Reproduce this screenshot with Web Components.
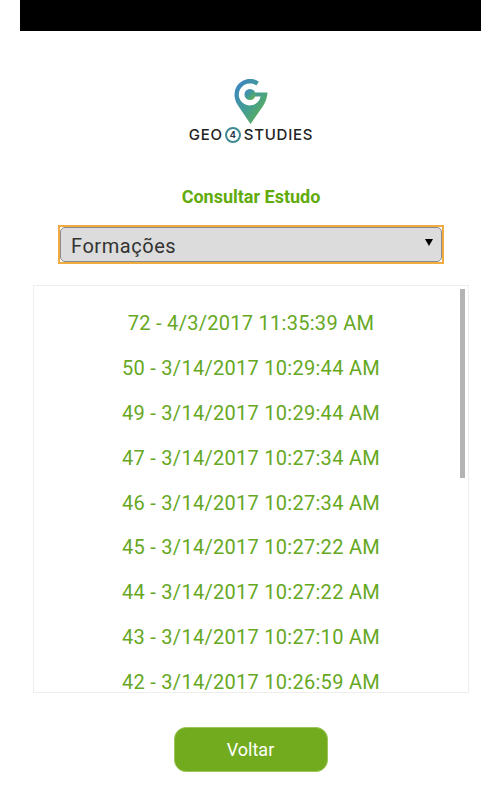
<!DOCTYPE html>
<html><head><meta charset="utf-8"><style>
html,body{margin:0;padding:0;background:#fff;height:800px;overflow:hidden;font-family:Roboto,sans-serif}
</style></head><body>
<app-page>
<top-bar></top-bar>
<geo-logo></geo-logo>
<page-title>Consultar Estudo</page-title>
<study-select>Formações</study-select>
<study-list>
<study-item>72 - 4/3/2017 11:35:39 AM</study-item>
<study-item>50 - 3/14/2017 10:29:44 AM</study-item>
<study-item>49 - 3/14/2017 10:29:44 AM</study-item>
<study-item>47 - 3/14/2017 10:27:34 AM</study-item>
<study-item>46 - 3/14/2017 10:27:34 AM</study-item>
<study-item>45 - 3/14/2017 10:27:22 AM</study-item>
<study-item>44 - 3/14/2017 10:27:22 AM</study-item>
<study-item>43 - 3/14/2017 10:27:10 AM</study-item>
<study-item>42 - 3/14/2017 10:26:59 AM</study-item>
</study-list>
<back-button>Voltar</back-button>
</app-page>
<script>
function def(name,html){
  customElements.define(name,class extends HTMLElement{
    constructor(){super();this.attachShadow({mode:'open'}).innerHTML=html;}
  });
}
def('app-page',`<style>:host{display:flex;flex-direction:column;align-items:center;width:502px;height:800px;overflow:hidden}</style><slot></slot>`);
def('top-bar',`<style>:host{display:block;width:461px;height:31px;background:#000;flex:none;align-self:flex-start;margin-left:20px}</style>`);
def('geo-logo',`<style>:host{display:flex;flex-direction:column;align-items:center;margin-top:48px;height:65px;flex:none}
svg{display:block}
.w{display:flex;align-items:center;font:500 15px/16px Inter,sans-serif;color:#222;margin-top:2px;height:16px;letter-spacing:.75px;white-space:nowrap}
.c{width:16px;height:16px;border-radius:50%;border:2.5px solid #3f8a92;box-sizing:border-box;font:700 9px/11px Inter,sans-serif;letter-spacing:0;text-align:center;color:#234;margin:0 3px 0 2px}
</style>
<svg width="34" height="46" viewBox="0 0 34 46"><defs><linearGradient id="g" x1="0" y1="0" x2="1" y2="1"><stop offset="0" stop-color="#3a80cc"/><stop offset=".55" stop-color="#46a08c"/><stop offset="1" stop-color="#6cb63c"/></linearGradient></defs>
<path fill="url(#g)" d="M24.900 2.800A15.500 15.500 0 0 0 .5 15.500C.5 21 3 25 5 28L16.500 45 27 30C30 26 33 21 33.500 13.500H16V17.500H26.600A11 11 0 1 1 22.300 6.500Z"/>
<circle cx="16" cy="15.500" r="5.500" fill="url(#g)"/></svg>
<div class="w"><span>GEO</span><span class="c">4</span><span>STUDIES</span></div>`);
def('page-title',`<style>:host{display:block;margin-top:43px;font:700 18px/20px Roboto,sans-serif;color:#62ab0c;text-align:center;flex:none}</style><slot></slot>`);
def('study-select',`<style>:host{display:block;box-sizing:border-box;width:386px;height:39px;margin-top:18px;border:2px solid #f0ac40;background:#fff;flex:none}
.b{display:flex;align-items:center;justify-content:space-between;box-sizing:border-box;height:100%;padding:2px 8px 0 10px;background:#dcdcdc;border-radius:5px;border:1px solid #8a8a8a;font:20px/24px Roboto,sans-serif;letter-spacing:.55px;color:#333}
i{width:0;height:0;border:4px solid transparent;border-top:7px solid #000;border-bottom:0;margin-top:-6px}</style><div class="b"><span><slot></slot></span><i></i></div>`);
def('study-list',`<style>:host{display:block;position:relative;box-sizing:border-box;width:436px;height:408px;margin-top:21px;border:1px solid #eee;background:#fff;overflow:hidden;flex:none}
.in{padding-top:15px}
.bar{position:absolute;right:3px;top:3px;width:5px;height:189px;background:#b4b4b4}
</style><div class="in"><slot></slot></div><div class="bar"></div>`);
def('study-item',`<style>:host{display:block;height:44.900px;font:20px/44.900px Roboto,sans-serif;letter-spacing:.28px;color:#66a81f;text-align:center;white-space:nowrap}</style><slot></slot>`);
def('back-button',`<style>:host{display:flex;align-items:center;justify-content:center;box-sizing:border-box;width:154px;height:45px;margin-top:34px;padding-right:1px;background:#72ac1e;border:1px solid #9cc65c;border-radius:12px;color:#fff;font:18px/20px Roboto,sans-serif;flex:none}</style><slot></slot>`);
</script>
</body></html>
